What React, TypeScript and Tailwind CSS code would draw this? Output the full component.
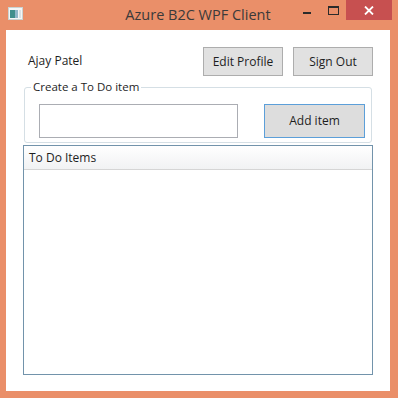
import React from "react";

const font = { fontFamily: '"Open Sans", "Noto Sans", sans-serif' };

const AppIcon = () => (
  <svg width="15" height="13" viewBox="0 0 15 13">
    <rect x="0.5" y="0.5" width="14" height="12" fill="#f4f6f6" stroke="#c9d3d3" />
    <rect x="2" y="3" width="5" height="8" fill="#3f8f8c" />
    <rect x="7" y="3" width="3" height="8" fill="#8fb7c9" />
    <rect x="11" y="3" width="2" height="8" fill="#d8e2e6" />
  </svg>
);

const WinButton = ({ label }: { label: string }) => (
  <button className="h-[29px] w-[80px] border border-[#adadad] bg-[#e1e1e1] text-[12px] text-[#1e1e1e]">
    {label}
  </button>
);

export default function App() {
  return (
    <div className="w-[398px] h-[398px] bg-[#ea8f69] flex flex-col" style={font}>
      {/* title bar */}
      <div className="h-[30px] flex items-start shrink-0">
        <div className="pl-[8px] pt-[7px]">
          <AppIcon />
        </div>
        <div className="flex-1 text-center text-[14.5px] text-[#3a3a3a] pt-[4px] pl-[79px]">
          Azure B2C WPF Client
        </div>
        <div className="flex items-start">
          <div className="w-[26px] h-[20px] flex items-center justify-center">
            <div className="w-[8px] h-[2px] bg-[#2b2b2b] mt-[6px]" />
          </div>
          <div className="w-[26px] h-[20px] flex items-start justify-center pt-[6px]">
            <div className="w-[11px] h-[9px] border border-[#2b2b2b] border-t-2" />
          </div>
          <div className="w-[46px] h-[20px] bg-[#c75050] flex items-center justify-center mr-[6px]">
            <svg width="10" height="9" viewBox="0 0 10 9">
              <path d="M1 0.5 L9 8.5 M9 0.5 L1 8.5" stroke="#fff" strokeWidth="1.8" />
            </svg>
          </div>
        </div>
      </div>

      {/* client area */}
      <div className="ml-[6px] mr-[8px] mb-[7px] flex-1 bg-white flex flex-col px-[17px] pt-[17px] text-[12px] text-[#1e1e1e]">
        <div className="flex items-center h-[29px]">
          <div className="flex-1 pl-[5px] pb-[1px]">Ajay Patel</div>
          <div className="flex gap-[10px]">
            <WinButton label="Edit Profile" />
            <WinButton label="Sign Out" />
          </div>
        </div>

        <div className="relative mt-[11px] mx-[1px] h-[56px] border border-[#d5dfe5] rounded-[3px] flex items-start pt-[16px] pl-[14px] pr-[6px]">
          <span className="absolute left-[6px] top-[-10px] bg-white px-[2px] leading-[18px] text-[11.5px]">
            Create a To Do item
          </span>
          <div className="w-[199px] h-[34px] border border-[#abadb3]" />
          <div className="flex-1" />
          <button className="w-[101px] h-[34px] border border-[#5c9fd9] bg-[#dddddd] text-[12px] text-[#1e1e1e]">
            Add item
          </button>
        </div>

        <div className="mt-[2px] h-[230px] border border-[#7293ab] flex flex-col">
          <div className="h-[24px] border-b border-[#d5d5d5] bg-gradient-to-b from-white to-[#f1f2f3] flex items-center pl-[5px]">
            To Do Items
          </div>
        </div>
      </div>
    </div>
  );
}
